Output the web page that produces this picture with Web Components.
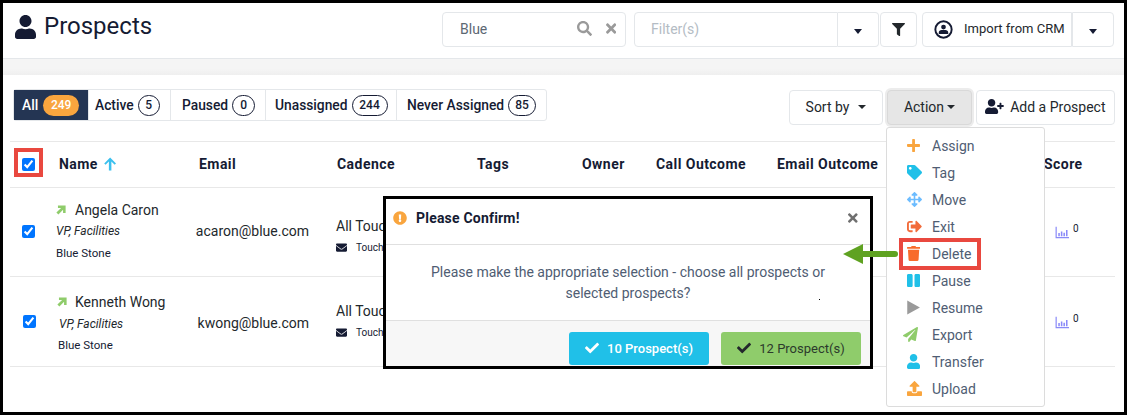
<!DOCTYPE html>
<html lang="en">
<head>
<meta charset="utf-8">
<title>Prospects</title>
<style>
  html, body { margin: 0; padding: 0; background: #fff; }
  body { font-family: Roboto, "Liberation Sans", sans-serif; font-size: 14px; color: #151b33; }
</style>
</head>
<body>
<app-frame>
  <page-header></page-header>
  <prospect-toolbar></prospect-toolbar>
  <prospect-table>
    <prospect-row check-left="12" check-top="-2" arrow-left="0" sub-left="0" who-top="-1" first-top="-1" mail-top="-2" cad-top="7">
      <span slot="name">Angela Caron</span>
      <span slot="title">VP, Facilities</span>
      <span slot="company">Blue Stone</span>
      <span slot="email">acaron@blue.com</span>
      <span slot="cadence">All Touches</span>
      <span slot="touch">Touch 1</span>
    </prospect-row>
    <prospect-row class="tall" check-left="13" check-top="-1" arrow-left="1" sub-left="3" who-top="4" first-top="0" mail-top="3" cad-top="-2">
      <span slot="name">Kenneth Wong</span>
      <span slot="title">VP, Facilities</span>
      <span slot="company">Blue Stone</span>
      <span slot="email">kwong@blue.com</span>
      <span slot="cadence">All Touches</span>
      <span slot="touch">Touch 1</span>
    </prospect-row>
  </prospect-table>
  <action-menu></action-menu>
  <confirm-dialog></confirm-dialog>
  <guide-marks></guide-marks>
</app-frame>

<script>
// icon shapes, [viewBox width, path]
const ICONS = {
  user: [448, 'M224 256c70.7 0 128-57.3 128-128S294.7 0 224 0 96 57.3 96 128s57.3 128 128 128zm89.6 32h-16.7c-22.2 10.2-46.9 16-72.9 16s-50.6-5.8-72.9-16h-16.7C60.2 288 0 348.2 0 422.4V464c0 26.5 21.5 48 48 48h352c26.5 0 48-21.5 48-48v-41.6c0-74.2-60.2-134.4-134.4-134.4z'],
  search: [512, 'M505 442.7L405.3 343c-4.5-4.5-10.6-7-17-7H372c27.6-35.3 44-79.7 44-128C416 93.1 322.9 0 208 0S0 93.1 0 208s93.1 208 208 208c48.3 0 92.7-16.4 128-44v16.3c0 6.4 2.5 12.5 7 17l99.7 99.7c9.4 9.4 24.6 9.4 33.9 0l28.3-28.3c9.4-9.4 9.4-24.6.1-34zM208 336c-70.7 0-128-57.2-128-128 0-70.7 57.2-128 128-128 70.7 0 128 57.2 128 128 0 70.7-57.2 128-128 128z'],
  times: [352, 'M242.72 256l100.07-100.07c12.28-12.28 12.28-32.19 0-44.48l-22.24-22.24c-12.28-12.28-32.19-12.28-44.48 0L176 189.28 75.93 89.21c-12.28-12.28-32.19-12.28-44.48 0L9.21 111.45c-12.28 12.28-12.28 32.19 0 44.48L109.28 256 9.21 356.07c-12.28 12.28-12.28 32.19 0 44.48l22.24 22.24c12.28 12.28 32.2 12.28 44.48 0L176 322.72l100.07 100.07c12.28 12.28 32.2 12.28 44.48 0l22.24-22.24c12.28-12.28 12.28-32.19 0-44.48L242.72 256z'],
  filter: [512, 'M487.976 0H24.028C2.71 0-8.047 25.866 7.058 40.971L192 225.941V432c0 7.831 3.821 15.17 10.237 19.662l80 55.98C298.02 518.69 320 507.493 320 487.98V225.941l184.947-184.97C520.021 25.896 509.338 0 487.976 0z'],
  usercircle: [512, 'M256 10a246 246 0 1 0 0 492 246 246 0 1 0 0-492zM256 62a194 194 0 1 1 0 388 194 194 0 1 1 0-388zM256 126a64 64 0 1 1 0 128 64 64 0 1 1 0-128zM128 376v-34c0-40 36-70 78-70h100c42 0 78 30 78 70v34z'],
  userplus: [640, 'M624 208h-64v-64c0-8.8-7.2-16-16-16h-32c-8.8 0-16 7.2-16 16v64h-64c-8.8 0-16 7.2-16 16v32c0 8.8 7.2 16 16 16h64v64c0 8.8 7.2 16 16 16h32c8.8 0 16-7.2 16-16v-64h64c8.8 0 16-7.2 16-16v-32c0-8.8-7.2-16-16-16zm-400 48c70.7 0 128-57.3 128-128S294.7 0 224 0 96 57.3 96 128s57.3 128 128 128zm89.6 32h-16.7c-22.2 10.2-46.9 16-72.9 16s-50.6-5.8-72.9-16h-16.7C60.2 288 0 348.2 0 422.4V464c0 26.5 21.5 48 48 48h352c26.5 0 48-21.5 48-48v-41.6c0-74.2-60.2-134.4-134.4-134.4z'],
  plus: [448, 'M416 208H272V64c0-17.67-14.33-32-32-32h-32c-17.67 0-32 14.33-32 32v144H32c-17.67 0-32 14.33-32 32v32c0 17.67 14.33 32 32 32h144v144c0 17.67 14.33 32 32 32h32c17.67 0 32-14.33 32-32V304h144c17.67 0 32-14.33 32-32v-32c0-17.67-14.33-32-32-32z'],
  tag: [512, 'M0 252.118V48C0 21.49 21.49 0 48 0h204.118a48 48 0 0 1 33.941 14.059l211.882 211.882c18.745 18.745 18.745 49.137 0 67.882L293.823 497.941c-18.745 18.745-49.137 18.745-67.882 0L14.059 286.059A48 48 0 0 1 0 252.118zM112 64c-26.51 0-48 21.49-48 48s21.49 48 48 48 48-21.49 48-48-21.49-48-48-48z'],
  move: [512, 'M352.201 425.775l-79.196 79.196c-9.373 9.373-24.568 9.373-33.941 0l-79.196-79.196c-15.119-15.119-4.411-40.971 16.971-40.97h51.162L228 284H127.196v51.162c0 21.382-25.851 32.09-40.971 16.971L7.029 272.937c-9.373-9.373-9.373-24.569 0-33.941L86.225 159.8c15.119-15.119 40.971-4.411 40.971 16.971V228H228V127.196h-51.23c-21.382 0-32.09-25.851-16.971-40.971l79.196-79.196c9.373-9.373 24.568-9.373 33.941 0l79.196 79.196c15.119 15.119 4.411 40.971-16.971 40.971h-51.162V228h100.804v-51.162c0-21.382 25.851-32.09 40.97-16.971l79.196 79.196c9.373 9.373 9.373 24.569 0 33.941L425.773 352.2c-15.119 15.119-40.971 4.411-40.97-16.971V284H284v100.804h51.23c21.382 0 32.09 25.851 16.971 40.971z'],
  exit: [512, 'M497 273L329 441c-15 15-41 4.5-41-17v-96H152c-13.3 0-24-10.7-24-24v-96c0-13.3 10.7-24 24-24h136V88c0-21.4 25.9-32 41-17l168 168c9.3 9.4 9.3 24.6 0 34zM192 436v-40c0-6.6-5.4-12-12-12H96c-17.7 0-32-14.3-32-32V160c0-17.7 14.3-32 32-32h84c6.6 0 12-5.4 12-12V76c0-6.6-5.4-12-12-12H96c-53 0-96 43-96 96v192c0 53 43 96 96 96h84c6.6 0 12-5.4 12-12z'],
  trash: [448, 'M432 32H312l-9.4-18.7A24 24 0 0 0 281.1 0H166.8a23.72 23.72 0 0 0-21.4 13.3L136 32H16A16 16 0 0 0 0 48v32a16 16 0 0 0 16 16h416a16 16 0 0 0 16-16V48a16 16 0 0 0-16-16zM53.2 467a48 48 0 0 0 47.9 45h245.8a48 48 0 0 0 47.9-45L416 128H32z'],
  pause: [448, 'M144 479H48c-26.5 0-48-21.5-48-48V79c0-26.5 21.5-48 48-48h96c26.5 0 48 21.5 48 48v352c0 26.5-21.5 48-48 48zm304-48V79c0-26.5-21.5-48-48-48h-96c-26.5 0-48 21.5-48 48v352c0 26.5 21.5 48 48 48h96c26.5 0 48-21.5 48-48z'],
  play: [448, 'M8 18L440 256 8 494z'],
  plane: [512, 'M476 3.2L12.5 270.6c-18.1 10.4-15.8 35.6 2.2 43.2L121 358.4l287.3-253.2c5.5-4.9 13.3 2.6 8.6 8.3L176 407v80.5c0 23.6 28.5 32.9 42.5 15.8L282 426l124.6 52.2c14.2 6 30.4-2.9 33-18.2l72-432C515 7.8 493.3-6.8 476 3.2z'],
  upload: [512, 'M296 384h-80c-13.3 0-24-10.7-24-24V192h-87.7c-17.8 0-26.7-21.5-14.1-34.1L242.3 5.7c7.5-7.5 19.8-7.5 27.3 0l152.2 152.2c12.6 12.6 3.7 34.1-14.1 34.1H320v168c0 13.3-10.7 24-24 24zm216-8v112c0 13.3-10.7 24-24 24H24c-13.3 0-24-10.7-24-24V376c0-13.3 10.7-24 24-24h136v8c0 30.9 25.1 56 56 56h80c30.9 0 56-25.1 56-56v-8h136c13.3 0 24 10.7 24 24z'],
  check: [512, 'M173.898 439.404l-166.4-166.4c-9.997-9.997-9.997-26.206 0-36.204l36.203-36.204c9.997-9.998 26.207-9.998 36.204 0L192 312.69 432.095 72.596c9.997-9.997 26.207-9.997 36.204 0l36.203 36.204c9.997 9.997 9.997 26.206 0 36.204l-294.4 294.401c-9.998 9.997-26.207 9.997-36.204-.001z'],
  warn: [512, 'M504 256c0 136.997-111.043 248-248 248S8 392.997 8 256C8 119.083 119.043 8 256 8s248 111.083 248 248zm-248 50c-25.405 0-46 20.595-46 46s20.595 46 46 46 46-20.595 46-46-20.595-46-46-46zm-43.673-165.346l7.418 136c.347 6.364 5.609 11.346 11.982 11.346h48.546c6.373 0 11.635-4.982 11.982-11.346l7.418-136c.375-6.874-5.098-12.654-11.982-12.654h-63.383c-6.884 0-12.356 5.78-11.981 12.654z'],
  envelope: [512, 'M502.3 190.8c3.9-3.1 9.7-.2 9.7 4.7V400c0 26.5-21.5 48-48 48H48c-26.5 0-48-21.5-48-48V195.6c0-5 5.7-7.8 9.7-4.7 22.4 17.4 52.1 39.5 154.1 113.6 21.1 15.4 56.7 47.8 92.2 47.6 35.7.3 72-32.8 92.3-47.6 102-74.1 131.6-96.3 154-113.7zM256 320c23.2.4 56.6-29.2 73.4-41.4 132.7-96.3 142.8-104.7 173.4-128.7 5.8-4.5 9.2-11.5 9.2-18.9v-19c0-26.5-21.5-48-48-48H48C21.5 64 0 85.5 0 112v19c0 7.4 3.4 14.3 9.2 18.9 30.6 23.9 40.7 32.4 173.4 128.7 16.8 12.2 50.2 41.8 73.4 41.4z'],
  bars: [512, 'M20 60h44v376h448v44H20zM120 290h56v120h-56zM214 240h56v170h-56zM308 280h56v130h-56zM402 180h56v230h-56z'],
  arrowup: [448, 'M224 20L440 236l-50 50-120-120v330h-92V166L58 286 8 236z'],
  upright: [512, 'M100 20h392v392H362V242L122 492 20 390 260 150H100z']
};

class UiIcon extends HTMLElement {
  connectedCallback() {
    const def = ICONS[this.getAttribute('name')];
    const size = this.getAttribute('size') || 14;
    const color = this.getAttribute('color') || 'currentColor';
    this.attachShadow({ mode: 'open' }).innerHTML = `
      <style>:host { display: inline-flex; align-items: center; justify-content: center; flex: none; } svg { display: block; }</style>
      <svg xmlns="http://www.w3.org/2000/svg" viewBox="0 0 ${def[0]} 512" height="${size}" width="${size * def[0] / 512}">
        <path fill="${color}" fill-rule="evenodd" d="${def[1]}"></path>
      </svg>`;
  }
}
customElements.define('ui-icon', UiIcon);

class AppFrame extends HTMLElement {
  constructor() {
    super();
    this.attachShadow({ mode: 'open' }).innerHTML = `
      <style>
        :host {
          display: block;
          position: relative;
          box-sizing: border-box;
          width: 1127px;
          height: 415px;
          border: 3px solid #000;
          background: #fff;
          overflow: hidden;
        }
      </style>
      <slot></slot>`;
  }
}
customElements.define('app-frame', AppFrame);

class PageHeader extends HTMLElement {
  constructor() {
    super();
    this.attachShadow({ mode: 'open' }).innerHTML = `
      <style>
        :host { display: block; }
        .bar { display: flex; height: 55px; box-sizing: border-box; padding: 9px 10px 0 12px; align-items: flex-start; }
        h1 { margin: 0; font-size: 24px; font-weight: 400; line-height: 28px; color: #151b33; display: flex; gap: 8px; align-items: center; flex: 1; }
        h1 ui-icon { margin-top: 1px; }
        .box { height: 35px; box-sizing: border-box; border: 1px solid #e4e7ea; display: flex; align-items: center; border-radius: 4px; background: #fff; }
        .search { width: 184px; padding: 0 9px 2px 17px; color: #5c6873; margin-right: 8px; }
        .search span { flex: 1; }
        .search ui-icon + ui-icon { margin-left: 14px; }
        .filter { width: 204px; padding: 0 0 2px 16px; color: #b4bcc4; border-radius: 4px 0 0 4px; }
        .end { width: 41px; justify-content: center; border-left: 0; border-radius: 0 4px 4px 0; }
        .funnel { width: 37px; justify-content: center; margin-left: 1px; margin-right: 5px; }
        .crm { width: 150px; padding-left: 11px; gap: 11px; font-size: 13px; color: #23282c; border-radius: 4px 0 0 4px; }
        .crm span { margin-top: -2px; white-space: nowrap; }
        .crmend { width: 42px; justify-content: center; border-left: 1px solid #e4e7ea; border-radius: 0 4px 4px 0; }
        .caret { width: 0; height: 0; border: 4px solid transparent; border-top: 5px solid #151b33; border-bottom: 0; margin-top: 4px; }
        .strip { height: 17px; box-sizing: border-box; border-top: 1px solid #e4e7ea; background: linear-gradient(#f5f5f5 60%, #efefef); }
      </style>
      <div class="bar">
        <h1><ui-icon name="user" size="24" color="#151b33"></ui-icon>Prospects</h1>
        <div class="box search"><span>Blue</span><ui-icon name="search" size="15" color="#9a9a9a"></ui-icon><ui-icon name="times" size="15" color="#9a9a9a"></ui-icon></div>
        <div class="box filter">Filter(s)</div>
        <div class="box end"><i class="caret"></i></div>
        <div class="box funnel"><ui-icon name="filter" size="13" color="#23282c"></ui-icon></div>
        <div class="box crm"><ui-icon name="usercircle" size="19" color="#151b33"></ui-icon><span>Import from CRM</span></div>
        <div class="box crmend"><i class="caret"></i></div>
      </div>
      <div class="strip"></div>`;
  }
}
customElements.define('page-header', PageHeader);

class ProspectToolbar extends HTMLElement {
  constructor() {
    super();
    // label, count, tab width, pill width, left padding
    const tabs = [['Active', '5', 82, 22, 6], ['Paused', '0', 95, 23, 11], ['Unassigned', '244', 131, 36, 9], ['Never Assigned', '85', 150, 28, 10]];
    this.attachShadow({ mode: 'open' }).innerHTML = `
      <style>
        :host { display: flex; justify-content: space-between; align-items: flex-start; padding: 14px 9px 0 10px; height: 66px; box-sizing: border-box; }
        .tabs { display: flex; height: 32px; box-sizing: border-box; border: 1px solid #e4e7ea; border-radius: 3px; font-size: 13.8px; font-weight: 500; }
        .tab { display: flex; align-items: center; gap: 4px; box-sizing: border-box; border-left: 1px solid #e4e7ea; color: #151b33; white-space: nowrap; }
        .tab.on { background: #243553; color: #fff; border-left: 0; width: 74px; padding-left: 8px; gap: 5px; }
        .pill { box-sizing: border-box; height: 21px; line-height: 19px; border: 1px solid #151b33; border-radius: 11px; text-align: center; font-size: 12px; flex: none; }
        .on .pill { background: #f9a53e; border: 0; line-height: 21px; width: 36px; color: #fff; }
        .btns { display: flex; height: 35px; margin-top: 1px; }
        .btn { box-sizing: border-box; height: 35px; padding-bottom: 2px; border: 1px solid #e4e7ea; border-radius: 4px; display: flex; align-items: center; justify-content: center; color: #23282c; }
        .sort { width: 94px; gap: 9px; }
        .action { width: 85px; margin-left: 4px; gap: 3px; background: #e6e6e6; border-color: #d9d9d9; box-shadow: 0 0 0 2px #ececec; }
        .add { width: 139px; margin-left: 4px; gap: 6px; }
        .caret { width: 0; height: 0; border: 4px solid transparent; border-top: 4px solid #23282c; border-bottom: 0; }
      </style>
      <div class="tabs">
        <div class="tab on">All <span class="pill">249</span></div>
        ${tabs.map(t => `<div class="tab" style="width:${t[2]}px;padding-left:${t[4]}px">${t[0]} <span class="pill" style="width:${t[3]}px">${t[1]}</span></div>`).join('')}
      </div>
      <div class="btns">
        <div class="btn sort">Sort by <i class="caret"></i></div>
        <div class="btn action">Action <i class="caret"></i></div>
        <div class="btn add"><ui-icon name="userplus" size="15" color="#151b33"></ui-icon>Add a Prospect</div>
      </div>`;
  }
}
customElements.define('prospect-toolbar', ProspectToolbar);

const TABLE_COLS = '46px 143px 138px 140px 105px 74px 121px 268px 70px';

class ProspectTable extends HTMLElement {
  constructor() {
    super();
    this.attachShadow({ mode: 'open' }).innerHTML = `
      <style>
        :host { display: block; margin: 0 9px 0 7px; border-top: 1px solid #e8e8e8; }
        .head { display: grid; grid-template-columns: ${TABLE_COLS}; height: 46px; padding-bottom: 1px; align-items: center; box-sizing: border-box; border-bottom: 1px solid #e8e8e8; font-weight: 700; letter-spacing: .45px; color: #151b33; }
        .box { padding-left: 12px; display: flex; }
        input { margin: 0; width: 13px; height: 13px; }
        .name { padding-left: 3px; display: flex; gap: 6px; align-items: center; }
        .score { margin-left: -1px; }
      </style>
      <div class="head">
        <div class="box"><input type="checkbox" checked></div>
        <div class="name">Name <ui-icon name="arrowup" size="14" color="#3bc0ee"></ui-icon></div>
        <div>Email</div>
        <div>Cadence</div>
        <div>Tags</div>
        <div>Owner</div>
        <div>Call Outcome</div>
        <div>Email Outcome</div>
        <div class="score">Score</div>
      </div>
      <slot></slot>`;
  }
}
customElements.define('prospect-table', ProspectTable);

class ProspectRow extends HTMLElement {
  connectedCallback() {
    const attr = (n) => Number(this.getAttribute(n) || 0);
    const tall = this.classList.contains('tall');
    this.attachShadow({ mode: 'open' }).innerHTML = `
      <style>
        :host { display: grid; grid-template-columns: ${TABLE_COLS}; min-height: ${tall ? 90 : 89}px; align-items: center; box-sizing: border-box; border-bottom: 1px solid #e8e8e8; color: #23282c; }
        input { margin: ${attr('check-top')}px 0 0 ${attr('check-left')}px; width: 13px; height: 13px; display: block; }
        .who { display: flex; flex-direction: column; margin-top: ${attr('who-top')}px; }
        .line { display: flex; align-items: center; height: 21.5px; }
        .first { padding-left: ${attr('arrow-left')}px; gap: ${9 - attr('arrow-left')}px; margin-top: ${attr('first-top')}px; }
        .title { padding-left: ${attr('sub-left')}px; font-size: 12px; font-style: italic; }
        .company { padding-left: ${attr('sub-left') - 1}px; font-size: 11.5px; color: #151b33; }
        .email { text-align: right; margin: ${attr('mail-top')}px 28px 0 -10px; }
        .cad { margin-top: ${attr('cad-top')}px; margin-left: -1px; }
        .touch { display: flex; align-items: center; gap: 9px; font-size: 10px; margin-top: 8px; color: #151b33; }
        .score { grid-column: 9; display: flex; align-items: flex-start; gap: 4px; padding-left: 10px; font-size: 10px; color: #151b33; }
        .score span { margin-top: -2px; }
        .spacer { grid-column: 5 / 9; }
      </style>
      <div><input type="checkbox" checked></div>
      <div class="who">
        <div class="line first"><ui-icon name="upright" size="10" color="#8fcc6b"></ui-icon><slot name="name"></slot></div>
        <div class="line title"><slot name="title"></slot></div>
        <div class="line company"><slot name="company"></slot></div>
      </div>
      <div class="email"><slot name="email"></slot></div>
      <div class="cad">
        <slot name="cadence"></slot>
        <div class="touch"><ui-icon name="envelope" size="11" color="#151b33"></ui-icon><slot name="touch"></slot></div>
      </div>
      <div class="spacer"></div>
      <div class="score"><ui-icon name="bars" size="14" color="#8a8af8"></ui-icon><span>0</span></div>`;
  }
}
customElements.define('prospect-row', ProspectRow);

class ActionMenu extends HTMLElement {
  constructor() {
    super();
    const items = [
      ['plus', 'Assign', '#f9a53e', 15, 0],
      ['tag', 'Tag', '#20c0e8', 15, 0],
      ['move', 'Move', '#6cbcff', 15, 0],
      ['exit', 'Exit', '#f26b3a', 15, 0],
      ['trash', 'Delete', '#f86c2c', 15, 0],
      ['pause', 'Pause', '#20c0e8', 15, 0],
      ['play', 'Resume', '#9a9a9a', 15, 0],
      ['plane', 'Export', '#8fcc6b', 15, -4],
      ['user', 'Transfer', '#20c0e8', 15, 0],
      ['upload', 'Upload', '#f9a53e', 15, 0]
    ];
    this.attachShadow({ mode: 'open' }).innerHTML = `
      <style>
        :host { position: absolute; left: 883px; top: 124px; width: 159px; box-sizing: border-box; height: 280px; padding-top: 4px; background: #fff; border: 1px solid #dcdcdc; border-radius: 3px; color: #4f5d73; z-index: 2; }
        .item { display: flex; align-items: center; height: 27px; padding-left: 20px; }
        .ic { display: flex; }
      </style>
      ${items.map(i => `<div class="item"><span class="ic" style="margin-left:${i[4]}px;width:${25 - i[4]}px"><ui-icon name="${i[0]}" size="${i[3]}" color="${i[2]}"></ui-icon></span>${i[1]}</div>`).join('')}`;
  }
}
customElements.define('action-menu', ActionMenu);

class ConfirmDialog extends HTMLElement {
  constructor() {
    super();
    this.attachShadow({ mode: 'open' }).innerHTML = `
      <style>
        :host { position: absolute; left: 380px; top: 193px; width: 490px; height: 173px; box-sizing: border-box; border: 3px solid #000; background: #fff; display: flex; flex-direction: column; z-index: 3; }
        header { height: 46px; box-sizing: border-box; border-bottom: 1px solid #e0e0e0; display: flex; align-items: center; padding: 0 12px 7px 7px; gap: 9px; font-weight: 700; color: #151b33; letter-spacing: .2px; }
        header span { flex: 1; }
        .body { flex: 1; text-align: center; color: #4f5d73; padding: 17px 40px 0; line-height: 21px; position: relative; }
        .dot { position: absolute; left: 433px; top: 54px; width: 1px; height: 1px; background: #000; }
        footer { height: 46px; box-sizing: border-box; border-top: 1px solid #e0e0e0; background: #f7f7f7; display: flex; justify-content: flex-end; align-items: flex-start; padding: 11px 9px 0 0; gap: 12px; }
        .btn { width: 140px; height: 33px; padding-bottom: 1px; box-sizing: border-box; font-size: 13px; border-radius: 3px; display: flex; align-items: center; justify-content: center; gap: 8px; }
        .blue { background: #20c0e8; color: #fff; font-weight: 500; }
        .green { background: #8fcc6b; color: #2c3a2c; }
      </style>
      <header><ui-icon name="warn" size="14" color="#f9a53e"></ui-icon><span>Please Confirm!</span><ui-icon name="times" size="14" color="#6f6f6f"></ui-icon></header>
      <div class="body">Please make the appropriate selection - choose all prospects or selected prospects?<i class="dot"></i></div>
      <footer>
        <div class="btn blue"><ui-icon name="check" size="14" color="#fff"></ui-icon>10 Prospect(s)</div>
        <div class="btn green"><ui-icon name="check" size="14" color="#23282c"></ui-icon>12 Prospect(s)</div>
      </footer>`;
  }
}
customElements.define('confirm-dialog', ConfirmDialog);

// red boxes and green arrow drawn over the screenshot
class GuideMarks extends HTMLElement {
  constructor() {
    super();
    this.attachShadow({ mode: 'open' }).innerHTML = `
      <style>
        :host { position: absolute; inset: 0; z-index: 4; pointer-events: none; }
        .red { position: absolute; box-sizing: border-box; border: 4px solid #e9483f; }
        .a { left: 11px; top: 145px; width: 29px; height: 29px; }
        .b { left: 896px; top: 235px; width: 82px; height: 32px; }
        svg { position: absolute; left: 840px; top: 240px; }
      </style>
      <div class="red a"></div>
      <div class="red b"></div>
      <svg width="58" height="22" viewBox="0 0 58 22"><path d="M0 11L20 1V8H52a3 3 0 0 1 0 6H20V21z" fill="#5fa221"></path></svg>`;
  }
}
customElements.define('guide-marks', GuideMarks);
</script>
</body>
</html>
